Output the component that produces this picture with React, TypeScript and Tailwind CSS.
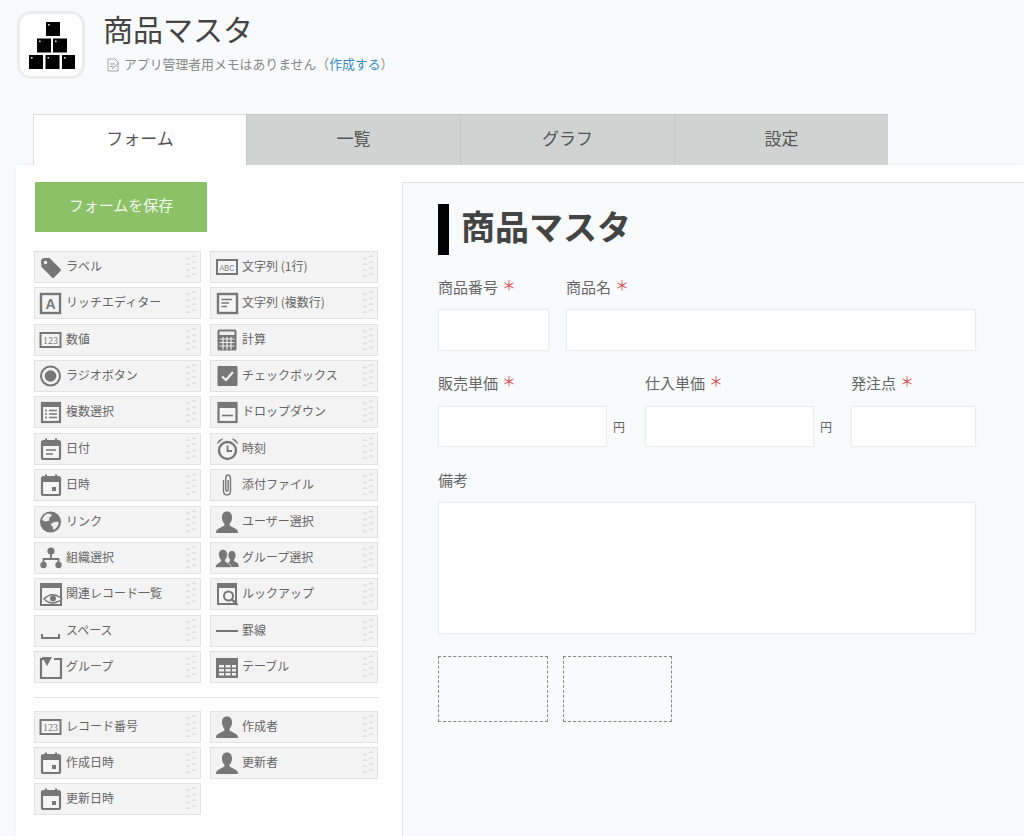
const FONT = { fontFamily: '"Noto Sans CJK JP", "Noto Sans", sans-serif' };
const G = "#777";

type IconName =
  | "tag" | "abc" | "rich" | "multi" | "num" | "calc" | "radio" | "check" | "list" | "drop"
  | "date" | "clock" | "datetime" | "clip" | "globe" | "user" | "org" | "group" | "related"
  | "lookup" | "space" | "line" | "fold" | "table";

function Icon({ name }: { name: IconName }) {
  const body = () => {
    switch (name) {
      case "tag":
        return (
          <>
            <path d="M2 6.5 Q2 3 5.5 3 H10.5 L21.5 14 Q22.5 15 21.5 16 L15 22.5 Q14 23.5 13 22.5 L2.5 12 Z" fill={G} />
            <circle cx="6.5" cy="7.5" r="1.7" fill="#f3f3f3" />
          </>
        );
      case "abc":
        return (
          <>
            <rect x="2" y="5" width="20" height="14" fill="#f5f5f5" stroke={G} strokeWidth="2" />
            <text x="12" y="15.5" textAnchor="middle" fontSize="9" textLength="15" lengthAdjust="spacingAndGlyphs" fill={G} fontFamily="Liberation Sans, sans-serif">ABC</text>
          </>
        );
      case "rich":
        return (
          <>
            <rect x="2" y="3" width="19" height="19" fill="#f5f5f5" stroke={G} strokeWidth="2.4" />
            <text x="11.5" y="18" textAnchor="middle" fontSize="14" fontWeight="700" fill={G} fontFamily="Liberation Sans, sans-serif">A</text>
          </>
        );
      case "multi":
        return (
          <>
            <rect x="3" y="3" width="19" height="19" fill="#f5f5f5" stroke={G} strokeWidth="2.4" />
            <path d="M6.5 8.5H17M6.5 12H14M6.5 15.5H12" stroke={G} strokeWidth="1.5" />
          </>
        );
      case "num":
        return (
          <>
            <rect x="1.5" y="5" width="20" height="14" fill="#f5f5f5" stroke={G} strokeWidth="2" />
            <text x="11.5" y="15.8" textAnchor="middle" fontSize="10" fill={G} fontFamily="Liberation Serif, serif">123</text>
          </>
        );
      case "calc":
        return (
          <>
            <rect x="2.5" y="1.5" width="19" height="21" rx="1.5" fill={G} />
            <rect x="4.5" y="3.5" width="15" height="3.5" fill="#eee" />
            <path d="M4.5 11H19.5M4.5 14.5H19.5M4.5 18H19.5M8 9V21.5M12 9V21.5M16 9V21.5" stroke="#eee" strokeWidth="1.2" />
          </>
        );
      case "radio":
        return (
          <>
            <circle cx="11.5" cy="12" r="9.5" fill="none" stroke={G} strokeWidth="2" />
            <circle cx="11.5" cy="12" r="5.8" fill={G} />
          </>
        );
      case "check":
        return (
          <>
            <rect x="2.5" y="2" width="20" height="20" rx="1" fill={G} />
            <path d="M7 12.5L11 16L18 8" fill="none" stroke="#f3f3f3" strokeWidth="2.2" />
          </>
        );
      case "list":
        return (
          <>
            <rect x="3" y="3" width="18" height="19" fill="#f5f5f5" stroke={G} strokeWidth="2.2" />
            <rect x="3" y="3" width="18" height="4" fill={G} />
            <path d="M6 10.5H8M10 10.5H18M6 14H8M10 14H18M6 17.5H8M10 17.5H18" stroke={G} strokeWidth="1.3" />
          </>
        );
      case "drop":
        return (
          <>
            <rect x="3.5" y="3" width="18" height="19" fill="#f5f5f5" stroke={G} strokeWidth="2.2" />
            <rect x="3.5" y="3" width="18" height="5" fill={G} />
            <path d="M7 15.5H18" stroke={G} strokeWidth="1.6" />
          </>
        );
      case "date":
      case "datetime":
        return (
          <>
            <rect x="3" y="4" width="18" height="18" rx="1.5" fill="#f5f5f5" stroke={G} strokeWidth="2.2" />
            <rect x="3" y="4" width="18" height="5" fill={G} />
            <path d="M7 1.5V5M17 1.5V5" stroke={G} strokeWidth="2" />
            {name === "date" ? (
              <path d="M7 13H17M7 17H14" stroke={G} strokeWidth="1.6" />
            ) : (
              <rect x="13" y="14" width="4" height="4" fill={G} />
            )}
          </>
        );
      case "clock":
        return (
          <>
            <circle cx="12.5" cy="13.5" r="8.5" fill="none" stroke={G} strokeWidth="2.4" />
            <path d="M12.5 8.5V14H17" fill="none" stroke={G} strokeWidth="1.8" />
            <path d="M2.5 6.5Q3.5 2.5 7.5 2ZM22.5 6.5Q21.5 2.5 17.5 2Z" fill={G} stroke={G} strokeWidth="1" />
          </>
        );
      case "clip":
        return (
          <path
            d="M8.5 7V17.5Q8.5 22 12 22Q15.5 22 15.5 17.5V5.5Q15.5 2 13 2Q10.8 2 10.8 5.5V16.5Q10.8 18 12 18Q13.2 18 13.2 16.5V7"
            fill="none"
            stroke={G}
            strokeWidth="1.4"
          />
        );
      case "globe":
        return (
          <>
            <circle cx="11.5" cy="12" r="10.5" fill={G} />
            <path d="M8.5 3.5Q12.5 3.5 13 5.5L10 8L10.5 10.5L6.5 11.5L3 10Q4.5 5 8.5 3.5ZM14 12.5L18.5 11.5L20 13Q18.5 18 14.5 20L13.5 16.5L11.5 14.5Z" fill="#eee" />
          </>
        );
      case "user":
        return (
          <path
            d="M12 1.5C15.6 1.5 17 4.2 17 7.5C17 10.2 15.8 12.5 14.6 13.8V15.5L21 19C22.4 19.8 23 21 23 23H1C1 21 1.6 19.8 3 19L9.4 15.5V13.8C8.2 12.5 7 10.2 7 7.5C7 4.2 8.4 1.5 12 1.5Z"
            fill={G}
          />
        );
      case "org":
        return (
          <>
            <circle cx="12" cy="5" r="3.6" fill={G} />
            <path d="M4.5 18V13H19.5V18M12 8V13" fill="none" stroke={G} strokeWidth="1.8" />
            <circle cx="4.5" cy="19" r="3.2" fill={G} />
            <circle cx="19.5" cy="19" r="3.2" fill={G} />
          </>
        );
      case "group":
        return (
          <>
            <path d="M17 5C19.6 5 20.6 7 20.6 9.4C20.6 11.2 19.8 12.6 19 13.6V15L22.5 17C23.4 17.6 23.6 19 23.6 21H14L13 17L15 15V13.6C14.2 12.6 13.4 11.2 13.4 9.4C13.4 7 14.4 5 17 5Z" fill={G} />
            <path d="M8 3.5C11 3.5 12.4 5.8 12.4 8.6C12.4 10.8 11.4 12.6 10.4 13.8V15.4L14.6 18C15.5 18.6 16 19.6 16 21.5H.5C.5 19.6 1 18.6 1.9 18L5.6 15.4V13.8C4.6 12.6 3.6 10.8 3.6 8.6C3.6 5.8 5 3.5 8 3.5Z" fill={G} stroke="#f3f3f3" strokeWidth=".6" />
          </>
        );
      case "related":
        return (
          <>
            <rect x="2" y="2" width="20" height="21" fill="#f5f5f5" stroke={G} strokeWidth="2" />
            <rect x="2" y="2" width="20" height="4" fill={G} />
            <path d="M5 17Q13 8.5 23 17Q13 25 5 17Z" fill="#f5f5f5" stroke={G} strokeWidth="1.4" />
            <circle cx="14" cy="16.5" r="3" fill={G} />
          </>
        );
      case "lookup":
        return (
          <>
            <rect x="3" y="2" width="18" height="20" fill="#f5f5f5" stroke={G} strokeWidth="2" />
            <rect x="3" y="2" width="18" height="4" fill={G} />
            <circle cx="13.5" cy="14" r="4.5" fill="#f5f5f5" stroke={G} strokeWidth="2" />
            <path d="M17 17.5L22.5 23" stroke={G} strokeWidth="2.4" />
          </>
        );
      case "space":
        return <path d="M3 15V19H20V15" fill="none" stroke={G} strokeWidth="2" />;
      case "line":
        return <path d="M1 12H23" stroke={G} strokeWidth="2" />;
      case "fold":
        return (
          <>
            <path d="M5 4H2V23H22V4H15" fill="none" stroke={G} strokeWidth="2.2" />
            <path d="M3 2H13L8 11Z" fill={G} />
          </>
        );
      case "table":
        return (
          <>
            <rect x="1" y="3" width="22" height="20" fill={G} />
            <path d="M4 10H9V12.5H4ZM10.5 10H15.5V12.5H10.5ZM17 10H21V12.5H17ZM4 14H9V16.5H4ZM10.5 14H15.5V16.5H10.5ZM17 14H21V16.5H17ZM4 18H9V20.5H4ZM10.5 18H15.5V20.5H10.5ZM17 18H21V20.5H17Z" fill="#f0f0f0" />
          </>
        );
    }
  };
  return (
    <svg width="24" height="24" viewBox="0 0 24 24" className="shrink-0">
      {body()}
    </svg>
  );
}

function Grip() {
  const rows = [0, 1, 2, 3];
  return (
    <svg width="14" height="26" viewBox="0 0 14 26" className="shrink-0">
      {rows.map((r) => (
        <g key={r} fill="none" stroke="#dcdcdc" strokeWidth="1.1">
          <path d={`M2 ${5 + r * 6}L4 ${3.5 + r * 6}L6 ${5 + r * 6}`} />
          <path d={`M8 ${3 + r * 6}L10 ${1.5 + r * 6}L12 ${3 + r * 6}`} />
        </g>
      ))}
    </svg>
  );
}

function PaletteItem({ icon, label }: { icon: IconName; label: string }) {
  return (
    <div className="flex h-[32px] items-center border border-[#e2e2e2] bg-[#f3f3f3] pl-[4px] pr-[2px]">
      <Icon name={icon} />
      <span className="ml-[3px] flex-1 pb-[2px] text-[12px] leading-none text-[#666]">{label}</span>
      <Grip />
    </div>
  );
}

const fields: [IconName, string][] = [
  ["tag", "ラベル"], ["abc", "文字列 (1行)"],
  ["rich", "リッチエディター"], ["multi", "文字列 (複数行)"],
  ["num", "数値"], ["calc", "計算"],
  ["radio", "ラジオボタン"], ["check", "チェックボックス"],
  ["list", "複数選択"], ["drop", "ドロップダウン"],
  ["date", "日付"], ["clock", "時刻"],
  ["datetime", "日時"], ["clip", "添付ファイル"],
  ["globe", "リンク"], ["user", "ユーザー選択"],
  ["org", "組織選択"], ["group", "グループ選択"],
  ["related", "関連レコード一覧"], ["lookup", "ルックアップ"],
  ["space", "スペース"], ["line", "罫線"],
  ["fold", "グループ"], ["table", "テーブル"],
];

const systemFields: [IconName, string][] = [
  ["num", "レコード番号"], ["user", "作成者"],
  ["datetime", "作成日時"], ["user", "更新者"],
  ["datetime", "更新日時"],
];

function AppIcon() {
  const boxes = [
    [19, 1], [10, 17.5], [26, 17.5], [2, 34], [18.5, 34], [35, 34],
  ];
  return (
    <div className="flex h-[68px] w-[68px] items-center justify-center rounded-[14px] border-[3px] border-[#ececec] bg-white">
      <svg width="48" height="48" viewBox="0 0 48 48">
        {boxes.map(([x, y]) => (
          <g key={`${x}-${y}`}>
            <rect x={x} y={y} width="14" height="14" fill="#000" />
            <rect x={x + 2} y={y + 2} width="1.6" height="1.6" fill="#ddd" />
          </g>
        ))}
      </svg>
    </div>
  );
}

function FieldLabel({ text, required, className }: { text: string; required?: boolean; className?: string }) {
  return (
    <div className={`flex h-[20px] items-center text-[15px] leading-none text-[#666] ${className ?? ""}`}>
      {text}
      {required && <span className="ml-[4px] mb-[4px] text-[14px] leading-none text-[#d9534f]">＊</span>}
    </div>
  );
}

function TextBox({ className }: { className: string }) {
  return <div className={`border border-[#ececec] bg-white shadow-[0_0_3px_rgba(0,0,0,0.03)] ${className}`} />;
}

function Tab({ label, active }: { label: string; active?: boolean }) {
  return (
    <div
      className={
        active
          ? "flex h-[51px] w-[213px] items-center justify-center border-l border-t border-[#dcdcdc] bg-white pb-[5px] text-[17px] text-[#555]"
          : "flex h-[51px] w-[214px] items-center justify-center border-l border-t border-[#c4c7c6] bg-[#d1d3d2] pb-[5px] text-[17px] text-[#555]"
      }
    >
      {label}
    </div>
  );
}

export default function App() {
  return (
    <div className="h-[836px] w-[1024px] overflow-hidden bg-[#f9fafb]" style={FONT}>
      <header className="flex h-[114px] pl-[17px] pt-[11px]">
        <AppIcon />
        <div className="ml-[18px]">
          <h1 className="h-[35px] text-[30px] leading-[35px] font-normal text-[#444]">商品マスタ</h1>
          <div className="mt-[8px] flex items-center text-[12.85px] leading-[20px] text-[#888]">
            <svg width="16" height="16" viewBox="0 0 16 16" className="ml-[2px] mr-[3px] mt-[2px]">
              <path d="M3 2H10L13 5V14H3Z" fill="none" stroke="#aaa" strokeWidth="1" />
              <path d="M5 7H10M5 9.5H8M7 12L14 6" stroke="#999" strokeWidth="1" />
            </svg>
            <span>アプリ管理者用メモはありません（</span>
            <span className="text-[#3b8ec2]">作成する</span>
            <span>）</span>
          </div>
        </div>
      </header>

      <nav className="flex pl-[33px]">
        <Tab label="フォーム" active />
        <Tab label="一覧" />
        <Tab label="グラフ" />
        <Tab label="設定" />
      </nav>

      <main className="ml-[16px] flex h-[671px] bg-white pt-[17px] shadow-[0_0_4px_rgba(0,0,0,0.06)]">
        <aside className="w-[386px] shrink-0 pl-[18px]">
          <button className="ml-[1px] h-[50px] w-[172px] bg-[#8cc168] pb-[4px] text-[15px] text-[#f4f9ef]">フォームを保存</button>

          <div className="mt-[19px] grid w-[344px] grid-cols-[167px_168px] gap-x-[9px] gap-y-[4.36px]">
            {fields.map(([icon, label]) => (
              <PaletteItem key={label + icon} icon={icon} label={label} />
            ))}
          </div>

          <div className="mb-[13px] mt-[14px] w-[345px] border-t border-[#e2e2e2]" />

          <div className="grid w-[344px] grid-cols-[167px_168px] gap-x-[9px] gap-y-[4px]">
            {systemFields.map(([icon, label]) => (
              <PaletteItem key={label} icon={icon} label={label} />
            ))}
          </div>
        </aside>

        <section className="flex-1 border-l border-t border-[#e4e4e4] bg-[#f8fafb] pl-[35px] pt-[21px]">
          <div className="flex h-[51px] items-center">
            <div className="h-[51px] w-[11px] bg-black" />
            <h2 className="ml-[12px] pb-[8px] text-[34px] leading-none font-bold text-[#444]">商品マスタ</h2>
          </div>

          <div className="mt-[21px] flex gap-[17px]">
            <div className="w-[111px]">
              <FieldLabel text="商品番号" required />
              <TextBox className="mt-[13px] h-[42px] w-[111px]" />
            </div>
            <div>
              <FieldLabel text="商品名" required />
              <TextBox className="mt-[13px] h-[42px] w-[410px]" />
            </div>
          </div>

          <div className="mt-[21px] flex">
            <div className="w-[207px]">
              <FieldLabel text="販売単価" required />
              <div className="mt-[14px] flex items-center">
                <TextBox className="h-[41px] w-[169px]" />
                <span className="ml-[6px] text-[12px] text-[#666]">円</span>
              </div>
            </div>
            <div className="w-[206px]">
              <FieldLabel text="仕入単価" required />
              <div className="mt-[14px] flex items-center">
                <TextBox className="h-[41px] w-[169px]" />
                <span className="ml-[6px] text-[12px] text-[#666]">円</span>
              </div>
            </div>
            <div>
              <FieldLabel text="発注点" required />
              <TextBox className="mt-[14px] h-[41px] w-[125px]" />
            </div>
          </div>

          <FieldLabel text="備考" className="mt-[22px]" />
          <TextBox className="mt-[13px] h-[132px] w-[538px]" />

          <div className="mt-[22px] flex gap-[15px]">
            <div className="h-[66px] w-[110px] border border-dashed border-[#888]" />
            <div className="h-[66px] w-[109px] border border-dashed border-[#888]" />
          </div>
        </section>
      </main>
    </div>
  );
}
